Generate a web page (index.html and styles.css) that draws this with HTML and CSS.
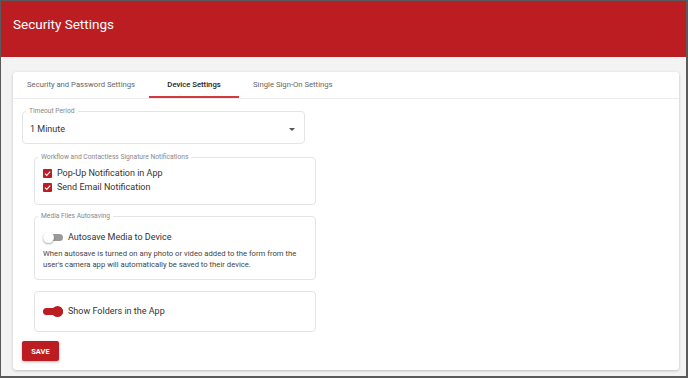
FILE: index.html
```html
<!DOCTYPE html>
<html lang="en">
<head>
  <meta charset="UTF-8" />
  <meta name="viewport" content="width=device-width, initial-scale=1.0"/>
  <title>Security Settings</title>
  <link rel="stylesheet" href="styles.css">
</head>
<body>
  <div class="frame">
    <header class="topbar">
      <h1>Security Settings</h1>
    </header>

    <div class="card">
      <div class="tabs">
        <div class="tab">Security and Password Settings</div>
        <div class="tab active">Device Settings</div>
        <div class="tab">Single Sign-On Settings</div>
      </div>

      <div class="content">
        <fieldset class="select">
          <legend>Timeout Period</legend>
          <div class="select-row">
            <span>1 Minute</span>
            <span class="caret"></span>
          </div>
        </fieldset>

        <div class="groups">
          <fieldset class="group notify">
            <legend>Workflow and Contactless Signature Notifications</legend>
            <label class="row">
              <span class="check"><svg viewBox="0 0 10 10"><path d="M2.2 5.2l2 2 3.8-4.2" /></svg></span>
              Pop-Up Notification in App
            </label>
            <label class="row">
              <span class="check"><svg viewBox="0 0 10 10"><path d="M2.2 5.2l2 2 3.8-4.2" /></svg></span>
              Send Email Notification
            </label>
          </fieldset>

          <fieldset class="group media">
            <legend>Media Files Autosaving</legend>
            <label class="row">
              <span class="switch"><span class="knob"></span></span>
              Autosave Media to Device
            </label>
            <p class="hint">When autosave is turned on any photo or video added to the form from the user's camera app will automatically be saved to their device.</p>
          </fieldset>

          <div class="group folders">
            <label class="row">
              <span class="switch on"><span class="knob"></span></span>
              Show Folders in the App
            </label>
          </div>
        </div>

        <button class="save">SAVE</button>
      </div>
    </div>
  </div>
</body>
</html>
```

FILE: styles.css
```css
* {
  box-sizing: border-box;
}
body {
  margin: 0;
  font-family: Roboto, 'Liberation Sans', sans-serif;
  background: #5a5a5a;
}
.frame {
  width: 688px;
  height: 378px;
  border-style: solid;
  border-color: #5a5a5a;
  border-width: 1px 2px 2px 1px;
  background: #f3f3f3;
  overflow: hidden;
}
.topbar {
  height: 56px;
  background: #bb1d23;
  padding: 15px 12px 0;
}
.topbar h1 {
  margin: 0;
  font-size: 13.5px;
  line-height: 17px;
  font-weight: 400;
  color: white;
}
.card {
  margin: 15px 7px 0 12px;
  height: 298px;
  background: white;
  border-radius: 3px;
  box-shadow: 0 1px 3px rgba(0, 0, 0, 0.22);
}
.tabs {
  display: flex;
  height: 27px;
  border-bottom: 1px solid #ececec;
}
.tab {
  min-width: 90px;
  padding: 0 14px;
  font-size: 7.7px;
  line-height: 26px;
  text-align: center;
  color: #666;
}
.tab.active {
  color: #222;
  font-weight: 500;
  border-bottom: 2px solid #d23a3f;
}
.content {
  padding: 8px 9px 9px;
}
fieldset {
  margin: 0;
  min-width: 0;
  border: 1px solid #e4e4e4;
  border-radius: 4px;
}
legend {
  padding: 0 3px;
  margin-left: -4px;
  font-size: 6.7px;
  line-height: 8px;
  color: #888;
}
.select {
  width: 283px;
  padding: 8px 8px 8px 7px;
}
.select-row {
  display: flex;
  justify-content: space-between;
  align-items: center;
  height: 12px;
  font-size: 9px;
  color: #333;
}
.caret {
  width: 0;
  height: 0;
  border-left: 3px solid transparent;
  border-right: 3px solid transparent;
  border-top: 3px solid #555;
  margin-right: 1px;
}
.groups {
  margin-left: 12px;
  width: 282px;
}
.group {
  padding: 0 8px;
}
.group legend {
  margin-left: -5px;
}
.notify {
  margin-top: 9px;
  padding-top: 5px;
  padding-bottom: 10px;
}
.media {
  margin-top: 7px;
  padding-top: 10px;
  padding-bottom: 9px;
}
.folders {
  margin-top: 11px;
  padding: 12px 8px 13px;
  border: 1px solid #e4e4e4;
  border-radius: 4px;
}
.row {
  display: flex;
  align-items: center;
  gap: 5px;
  height: 14px;
  font-size: 9px;
  color: #333;
}
.check {
  width: 9px;
  height: 9px;
  background: #bb1d23;
  border-radius: 1px;
  display: flex;
}
.check svg {
  width: 9px;
  height: 9px;
  fill: none;
  stroke: white;
  stroke-width: 1.3;
}
.switch {
  position: relative;
  width: 20px;
  height: 7px;
  border-radius: 4px;
  background: #9a9a9a;
}
.switch .knob {
  position: absolute;
  left: 0;
  top: -2px;
  width: 11px;
  height: 11px;
  border-radius: 50%;
  background: white;
  box-shadow: 0 1px 2px rgba(0, 0, 0, 0.35);
}
.switch.on {
  background: #bb1d23;
}
.switch.on .knob {
  left: 9px;
  background: #bb1d23;
  box-shadow: none;
}
.hint {
  margin: 4px 0 0;
  font-size: 7.7px;
  line-height: 11px;
  color: #444;
}
.save {
  display: block;
  margin-top: 9px;
  width: 37px;
  height: 20px;
  padding: 0;
  border: none;
  border-radius: 2px;
  background: #bb1d23;
  color: white;
  font-family: Roboto, 'Liberation Sans', sans-serif;
  font-size: 7.5px;
  font-weight: 700;
  box-shadow: 0 1px 3px rgba(0, 0, 0, 0.3);
}
```
